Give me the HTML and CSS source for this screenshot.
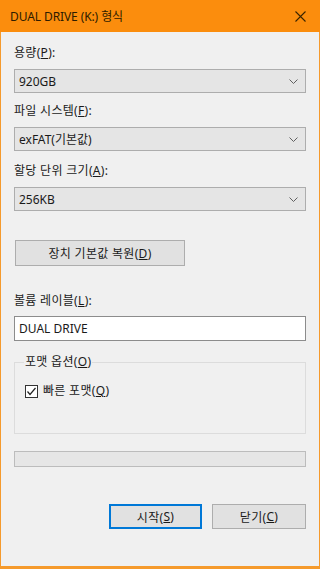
FILE: index.html
```html
<!DOCTYPE html>
<html lang="ko">
<head>
    <meta charset="UTF-8">
    <meta name="viewport" content="width=device-width, initial-scale=1.0">
    <title>DUAL DRIVE (K:) 형식</title>
    <link rel="stylesheet" href="styles.css">
</head>
<body>

    <div class="window">
        <div class="titlebar">
            <span class="title">DUAL DRIVE (K:) 형식</span>
            <svg class="close" width="11" height="11" viewBox="0 0 11 11">
                <path d="M0.5 0.5 L10.5 10.5 M10.5 0.5 L0.5 10.5" stroke="#3a2400" stroke-width="1.1" fill="none"/>
            </svg>
        </div>

        <div class="content">
            <div class="label">용량(<u>P</u>):</div>
            <div class="combo">
                <span>920GB</span>
                <svg class="chevron" width="9" height="5" viewBox="0 0 9 5"><path d="M0.5 0.5 L4.5 4.5 L8.5 0.5" stroke="#606060" fill="none"/></svg>
            </div>

            <div class="label gap-a">파일 시스템(<u>F</u>):</div>
            <div class="combo">
                <span>exFAT(기본값)</span>
                <svg class="chevron" width="9" height="5" viewBox="0 0 9 5"><path d="M0.5 0.5 L4.5 4.5 L8.5 0.5" stroke="#606060" fill="none"/></svg>
            </div>

            <div class="label gap-b">할당 단위 크기(<u>A</u>):</div>
            <div class="combo">
                <span>256KB</span>
                <svg class="chevron" width="9" height="5" viewBox="0 0 9 5"><path d="M0.5 0.5 L4.5 4.5 L8.5 0.5" stroke="#606060" fill="none"/></svg>
            </div>

            <div class="btn restore">장치 기본값 복원(<u>D</u>)</div>

            <div class="label gap-c">볼륨 레이블(<u>L</u>):</div>
            <div class="textbox">DUAL DRIVE</div>

            <fieldset class="group">
                <legend>포맷 옵션(<u>O</u>)</legend>
                <div class="check-row">
                    <svg class="checkbox" width="13" height="13" viewBox="0 0 13 13">
                        <rect x="0.5" y="0.5" width="12" height="12" fill="#fff" stroke="#333"/>
                        <path d="M2.5 6.5 L5 9.5 L10.5 3" stroke="#222" stroke-width="1.2" fill="none"/>
                    </svg>
                    <span>빠른 포맷(<u>Q</u>)</span>
                </div>
            </fieldset>

            <div class="progress"></div>

            <div class="actions">
                <div class="btn action default">시작(<u>S</u>)</div>
                <div class="btn action">닫기(<u>C</u>)</div>
            </div>
        </div>
    </div>

</body>
</html>
```

FILE: styles.css
```css
/* Dialog */
body {
    margin: 0;
    font-family: 'Noto Sans', 'Noto Sans CJK KR', sans-serif;
    font-size: 12px;
    color: #1a1a1a;
    background: #f0f0f0;
}

.window {
    width: 320px;
    height: 569px;
    box-sizing: border-box;
    background: #f0f0f0;
    border: 1px solid #f59a2c;
    border-top: none;
    border-bottom-width: 3px;
    display: flex;
    flex-direction: column;
}

.titlebar {
    height: 32px;
    margin: 0 -1px;
    background: #fb8d0d;
    display: flex;
    align-items: center;
    justify-content: space-between;
    padding: 0 14px 0 10px;
    color: #2e1c00;
    font-size: 12px;
}

.title {
    letter-spacing: -0.1px;
}

.content {
    padding: 13px 13px 0 13px;
    display: flex;
    flex-direction: column;
}

.label {
    line-height: 16px;
    height: 16px;
    letter-spacing: 0.3px;
}

.gap-a { margin-top: 10px; }
.gap-b { margin-top: 12px; }
.gap-c { margin-top: 27px; }

.combo {
    margin-top: 8px;
    height: 24px;
    box-sizing: border-box;
    border: 1px solid #adadad;
    background: #e5e5e5;
    display: flex;
    align-items: center;
    justify-content: space-between;
    padding: 0 7px 0 4px;
}

.btn {
    height: 26px;
    box-sizing: border-box;
    border: 1px solid #adadad;
    background: #e1e1e1;
    display: flex;
    align-items: center;
    justify-content: center;
    letter-spacing: 0.3px;
}

.restore {
    width: 170px;
    margin: 29px 0 0 1px;
}

.textbox {
    margin-top: 7px;
    height: 25px;
    box-sizing: border-box;
    border: 1px solid #8c8c8c;
    background: #fff;
    display: flex;
    align-items: center;
    padding: 0 4px;
}

.group {
    margin: 13px 0 0 0;
    padding: 13px 9px 0 9px;
    height: 80px;
    box-sizing: border-box;
    border: 1px solid #dcdcdc;
    min-width: 0;
}

.group legend {
    padding: 0 1px;
    margin-left: 0;
    line-height: 16px;
    letter-spacing: 0.3px;
}

.check-row {
    display: flex;
    align-items: center;
    gap: 5px;
    line-height: 16px;
    margin-left: 1px;
    color: #1a1a1a;
    letter-spacing: 0.3px;
}

.progress {
    margin-top: 17px;
    height: 16px;
    box-sizing: border-box;
    border: 1px solid #bcbcbc;
    background: #e6e6e6;
}

.actions {
    margin-top: 37px;
    display: flex;
    justify-content: flex-end;
    gap: 10px;
}

.action {
    width: 94px;
    height: 25px;
}

.action.default {
    width: 93px;
    border: 2px solid #0078d7;
}

u {
    text-decoration-thickness: 1px;
    text-underline-offset: 1px;
}
```
